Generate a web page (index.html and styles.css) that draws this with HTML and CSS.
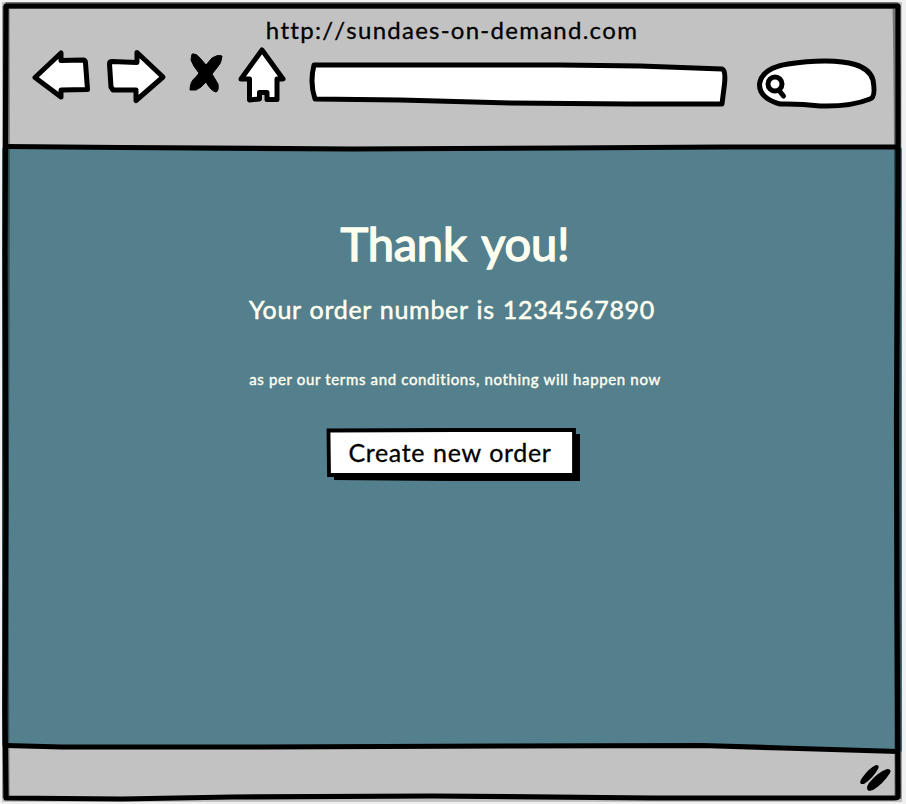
FILE: index.html
```html
<!DOCTYPE html>
<html lang="en">
<head>
<meta charset="utf-8">
<title>Sundaes on demand</title>
<link rel="stylesheet" href="styles.css">
</head>
<body>
<main class="window">
  <header class="toolbar">
    <div class="address">http://sundaes-on-demand.com</div>
    <svg class="controls" viewBox="0 0 900 63" aria-hidden="true">
      <g class="ink" transform="translate(-2 -47)">
        <path d="M35 77.5 L61 53 V60.5 L83 60 Q85.500 60 85.500 63 L87.500 89.500 L61 90 V97 Z"/>
        <path d="M109.500 64 Q109.500 61.500 112 61.500 L137 62.500 V52.500 L163 77 L136 100.500 V90 L113 90 L111 87 Z"/>
        <path d="M262 50 L283 79 L277 79 L277 99.500 L267 99.500 V92.500 H259.500 V99 L249.500 100 V79 L241 79 Z"/>
        <path d="M314 65 L560 65 L640 66 L722 69 Q726 70 724.500 84 L722 104 L630 104 L510 103 L400 100 L315 99 Q309.500 83 314 65 Z"/>
        <path d="M788 64 C814 60 840 60 855 64.500 Q870 69 873 80 Q876 97 870 99 Q850 107 820 106 Q800 103.500 780 104 Q759 98 759.500 84 Q762 68 788 64 Z"/>
        <circle cx="775" cy="84" r="7"/>
        <path d="M779.500 91 L783.500 96"/>
      </g>
      <g class="solid" transform="translate(-2 -47)">
        <path d="M192 54 Q196 53 200 58 L206 65 L212 58 Q218 54 222 56 Q222 63 216 69 L212 74 L218 84 Q219 91 216 92 Q211 91 206 82 Q201 88 196 90 L190 90 Q190 81 196 77 L199 73 Q193 66 191 60 Z"/>
      </g>
    </svg>
  </header>
  <section class="content">
    <h1>Thank you!</h1>
    <p class="order">Your order number is 1234567890</p>
    <p class="terms">as per our terms and conditions, nothing will happen now</p>
    <button class="create" type="button">
      <svg class="create-frame" viewBox="0 0 256 54" aria-hidden="true">
        <path class="shadow" d="M8 46 H246 V7 H254 V54 H120 L8 53 Z"/>
        <path class="sheet" d="M3.5 4.5 L60 4 L248 4.5 L248 46 H7 L4.500 46 Z"/>
        <path class="edge" d="M2.500 3.500 L130 3 L248 3 V48 H3 Z"/>
      </svg>
      <span>Create new order</span>
    </button>
  </section>
  <footer class="status">
    <svg class="grip" viewBox="0 0 34 30" aria-hidden="true">
      <path d="M4 15 Q11 5 18 2 Q22 2 20 6 Q15 15 6 21 L3 21 Q1 19 4 15 Z M11 20 Q20 9 29 6 Q34 6 32 10 Q25 21 15 27 L11 28 Q7 26 11 20 Z"/>
    </svg>
  </footer>
  <svg class="frame" viewBox="0 0 900 800" aria-hidden="true">
    <path class="wedge" d="M700 743 H900 V749.500 H896 Z"/>
    <path class="halo" d="M3.5 3.5 H894 Q896 100 895.5 300 L896 797 M4 4 Q5 300 3 500 L4 796"/>
    <path d="M4 4 H896 L896 180 L894.500 420 L895 600 L896 794 Q896 796 892 796 L650 796 L430 794 L230 795 L120 797 L4 796 L3 710 L4 500 L3 250 Z"/>
    <path d="M4 144.5 L120 145.5 L350 147 L560 146 L720 145 L896 145"/>
    <path d="M4 743.5 L60 745 L260 745 L500 744 L700 743.5 L780 746 L896 749.5"/>
  </svg>
</main>
</body>
</html>
```
FILE: styles.css
```css
* { box-sizing: border-box; }
body { margin: 0; background: #f0f0f0; font-family: Lato, "Liberation Sans", sans-serif; }
.window {
  position: relative;
  display: flex;
  flex-direction: column;
  width: 900px;
  height: 800px;
  margin: 2px;
  background: #c2c2c2;
}
.toolbar { height: 146px; flex: none; padding-top: 12px; }
.address {
  height: 33px;
  font-size: 24px;
  line-height: 32px;
  letter-spacing: 1.25px;
  font-kerning: none;
  text-align: center;
  color: #000;
  -webkit-text-stroke: .3px #000;
}
.controls { display: block; width: 900px; height: 63px; }
.ink { fill: #fff; stroke: #000; stroke-width: 5; stroke-linejoin: round; stroke-linecap: round; }
.solid { fill: #000; stroke: #000; stroke-width: 1; }
.content {
  display: flex;
  flex-direction: column;
  align-items: center;
  height: 598px;
  flex: none;
  padding: 65px 0 0 3px;
  background: #547f8d;
  color: #fffff0;
  white-space: nowrap;
}
h1 {
  margin: 0 0 0 3px;
  font-size: 47px;
  line-height: 60px;
  font-weight: 400;
  letter-spacing: -.2px;
  word-spacing: 4px;
  -webkit-text-stroke: 1.4px #fffff0;
}
p { margin: 0; }
.order { margin: 20px 3px 0 0; font-size: 25px; line-height: 32px; letter-spacing: .72px; word-spacing: 1px; -webkit-text-stroke: .5px #fffff0; }
.terms { margin: 44px 0 0 3px; font-size: 15px; line-height: 20px; letter-spacing: .65px; -webkit-text-stroke: .4px #fffff0; }
.create {
  position: relative;
  width: 256px;
  height: 54px;
  margin-top: 38px;
  padding: 0 7px 3px 0;
  border: 0;
  background: none;
  font: 25px/51px Lato, "Liberation Sans", sans-serif;
  letter-spacing: .65px;
  word-spacing: 1px;
  color: #000;
  -webkit-text-stroke: .3px #000;
}
.create span { position: relative; }
.create-frame { position: absolute; inset: 0; width: 256px; height: 54px; }
.shadow { fill: #000; }
.sheet { fill: #fff; }
.edge { fill: none; stroke: #000; stroke-width: 3.8; }
.status { flex: 1; display: flex; justify-content: flex-end; padding: 17px 10px 0 0; }
.grip { width: 34px; height: 30px; }
.frame { position: absolute; inset: 0; width: 900px; height: 800px; fill: none; stroke: #000; stroke-width: 5.2; stroke-linejoin: round; pointer-events: none; }
.frame .wedge { fill: #547f8d; stroke: none; }
.halo { stroke-width: 7; stroke-opacity: .4; }
```
